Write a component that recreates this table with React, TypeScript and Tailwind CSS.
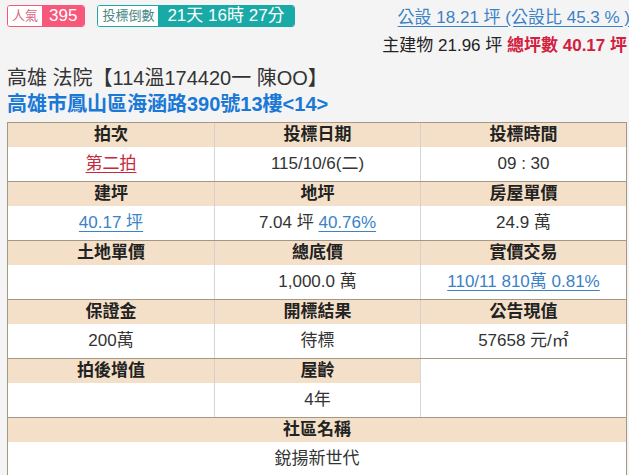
const FONT = '"Liberation Sans", "Noto Sans CJK TC", sans-serif'

type Cell = { label: string; value: React.ReactNode }

const Link = ({ children, red }: { children: React.ReactNode; red?: boolean }) => (
  <span className={`underline underline-offset-[3px] ${red ? 'text-[#c8283a] decoration-[#c8283a]' : 'text-[#3b82c6] decoration-[#3b82c6]'}`}>
    {children}
  </span>
)

const sections: Cell[][] = [
  [
    { label: '拍次', value: <Link red>第二拍</Link> },
    { label: '投標日期', value: '115/10/6(二)' },
    { label: '投標時間', value: '09 : 30' },
  ],
  [
    { label: '建坪', value: <Link>40.17 坪</Link> },
    { label: '地坪', value: <>7.04 坪{' '}<Link>40.76%</Link></> },
    { label: '房屋單價', value: '24.9 萬' },
  ],
  [
    { label: '土地單價', value: '' },
    { label: '總底價', value: '1,000.0 萬' },
    { label: '實價交易', value: <Link>110/11 810萬 0.81%</Link> },
  ],
  [
    { label: '保證金', value: '200萬' },
    { label: '開標結果', value: '待標' },
    { label: '公告現值', value: '57658 元/㎡' },
  ],
]

function HeaderCell({ children, first }: { children: React.ReactNode; first?: boolean }) {
  return (
    <div className={`h-[24px] bg-[#f4e0c8] flex items-center justify-center font-bold text-[17px] text-[#222] ${first ? '' : 'border-l border-[#d6d0c8]'}`}>
      {children}
    </div>
  )
}

function ValueCell({ children, first }: { children: React.ReactNode; first?: boolean }) {
  return (
    <div className={`h-[34px] bg-white flex items-center justify-center text-[17px] text-[#333] whitespace-pre ${first ? '' : 'border-l border-[#d6d6d6]'}`}>
      {children}
    </div>
  )
}

export default function App() {
  return (
    <div className="w-[629px] h-[475px] bg-[#f4f4f4] overflow-hidden" style={{ fontFamily: FONT }}>
      {/* top bar */}
      <div className="flex justify-between pl-[7px] h-[65px]">
        <div className="flex gap-3 pt-[5px] items-start">
          <div className="flex h-[22px] rounded-[3px] overflow-hidden border border-[#f7587a]">
            <span className="bg-white text-[#d26780] text-[13px] px-[4px] flex items-center">人氣</span>
            <span className="bg-[#f7587a] text-white text-[17px] px-[7px] flex items-center">395</span>
          </div>
          <div className="flex h-[22px] rounded-[3px] overflow-hidden border border-[#19aaa7]">
            <span className="bg-white text-[#4a8886] text-[13px] px-[4px] flex items-center">投標倒數</span>
            <span className="bg-[#19aaa7] text-white text-[17px] px-[9px] flex items-center whitespace-pre">21天 16時 27分</span>
          </div>
        </div>
        <div className="flex flex-col items-end pt-[7px] whitespace-nowrap">
          <div className="text-[17px] leading-[21px] text-[#3b82c6] underline underline-offset-[3px] mr-[-1px]">
            公設 18.21 坪 (公設比 45.3 % )
          </div>
          <div className="text-[17px] leading-[21px] mt-[7px] text-[#222] mr-[2px]">
            主建物 21.96 坪 <span className="font-bold text-[#d2203e]">總坪數 40.17 坪</span>
          </div>
        </div>
      </div>

      {/* title */}
      <div className="px-[7px]">
        <div className="text-[20px] leading-[26px] text-[#333]">高雄 法院【114溫174420一 陳OO】</div>
        <div className="text-[20px] leading-[26px] font-bold text-[#1a78d6]">高雄市鳳山區海涵路390號13樓&lt;14&gt;</div>
      </div>

      {/* table */}
      <div className="ml-[7px] mt-[5px] w-[620px] border-l border-r border-[#a39786] bg-white">
        {sections.map((row, i) => (
          <div key={i} className="grid grid-cols-3 border-t border-[#a39786]">
            {row.map((c, j) => (
              <HeaderCell key={c.label} first={j === 0}>{c.label}</HeaderCell>
            ))}
            {row.map((c, j) => (
              <ValueCell key={c.label} first={j === 0}>{c.value}</ValueCell>
            ))}
          </div>
        ))}
        <div className="grid grid-cols-3 border-t border-[#a39786]">
          <HeaderCell first>拍後增值</HeaderCell>
          <HeaderCell>屋齡</HeaderCell>
          <div className="row-span-2 bg-white border-l border-[#d6d6d6]" />
          <ValueCell first>{''}</ValueCell>
          <ValueCell>4年</ValueCell>
        </div>
        <div className="border-t border-[#a39786]">
          <HeaderCell first>社區名稱</HeaderCell>
          <ValueCell first>銳揚新世代</ValueCell>
        </div>
      </div>
    </div>
  )
}
